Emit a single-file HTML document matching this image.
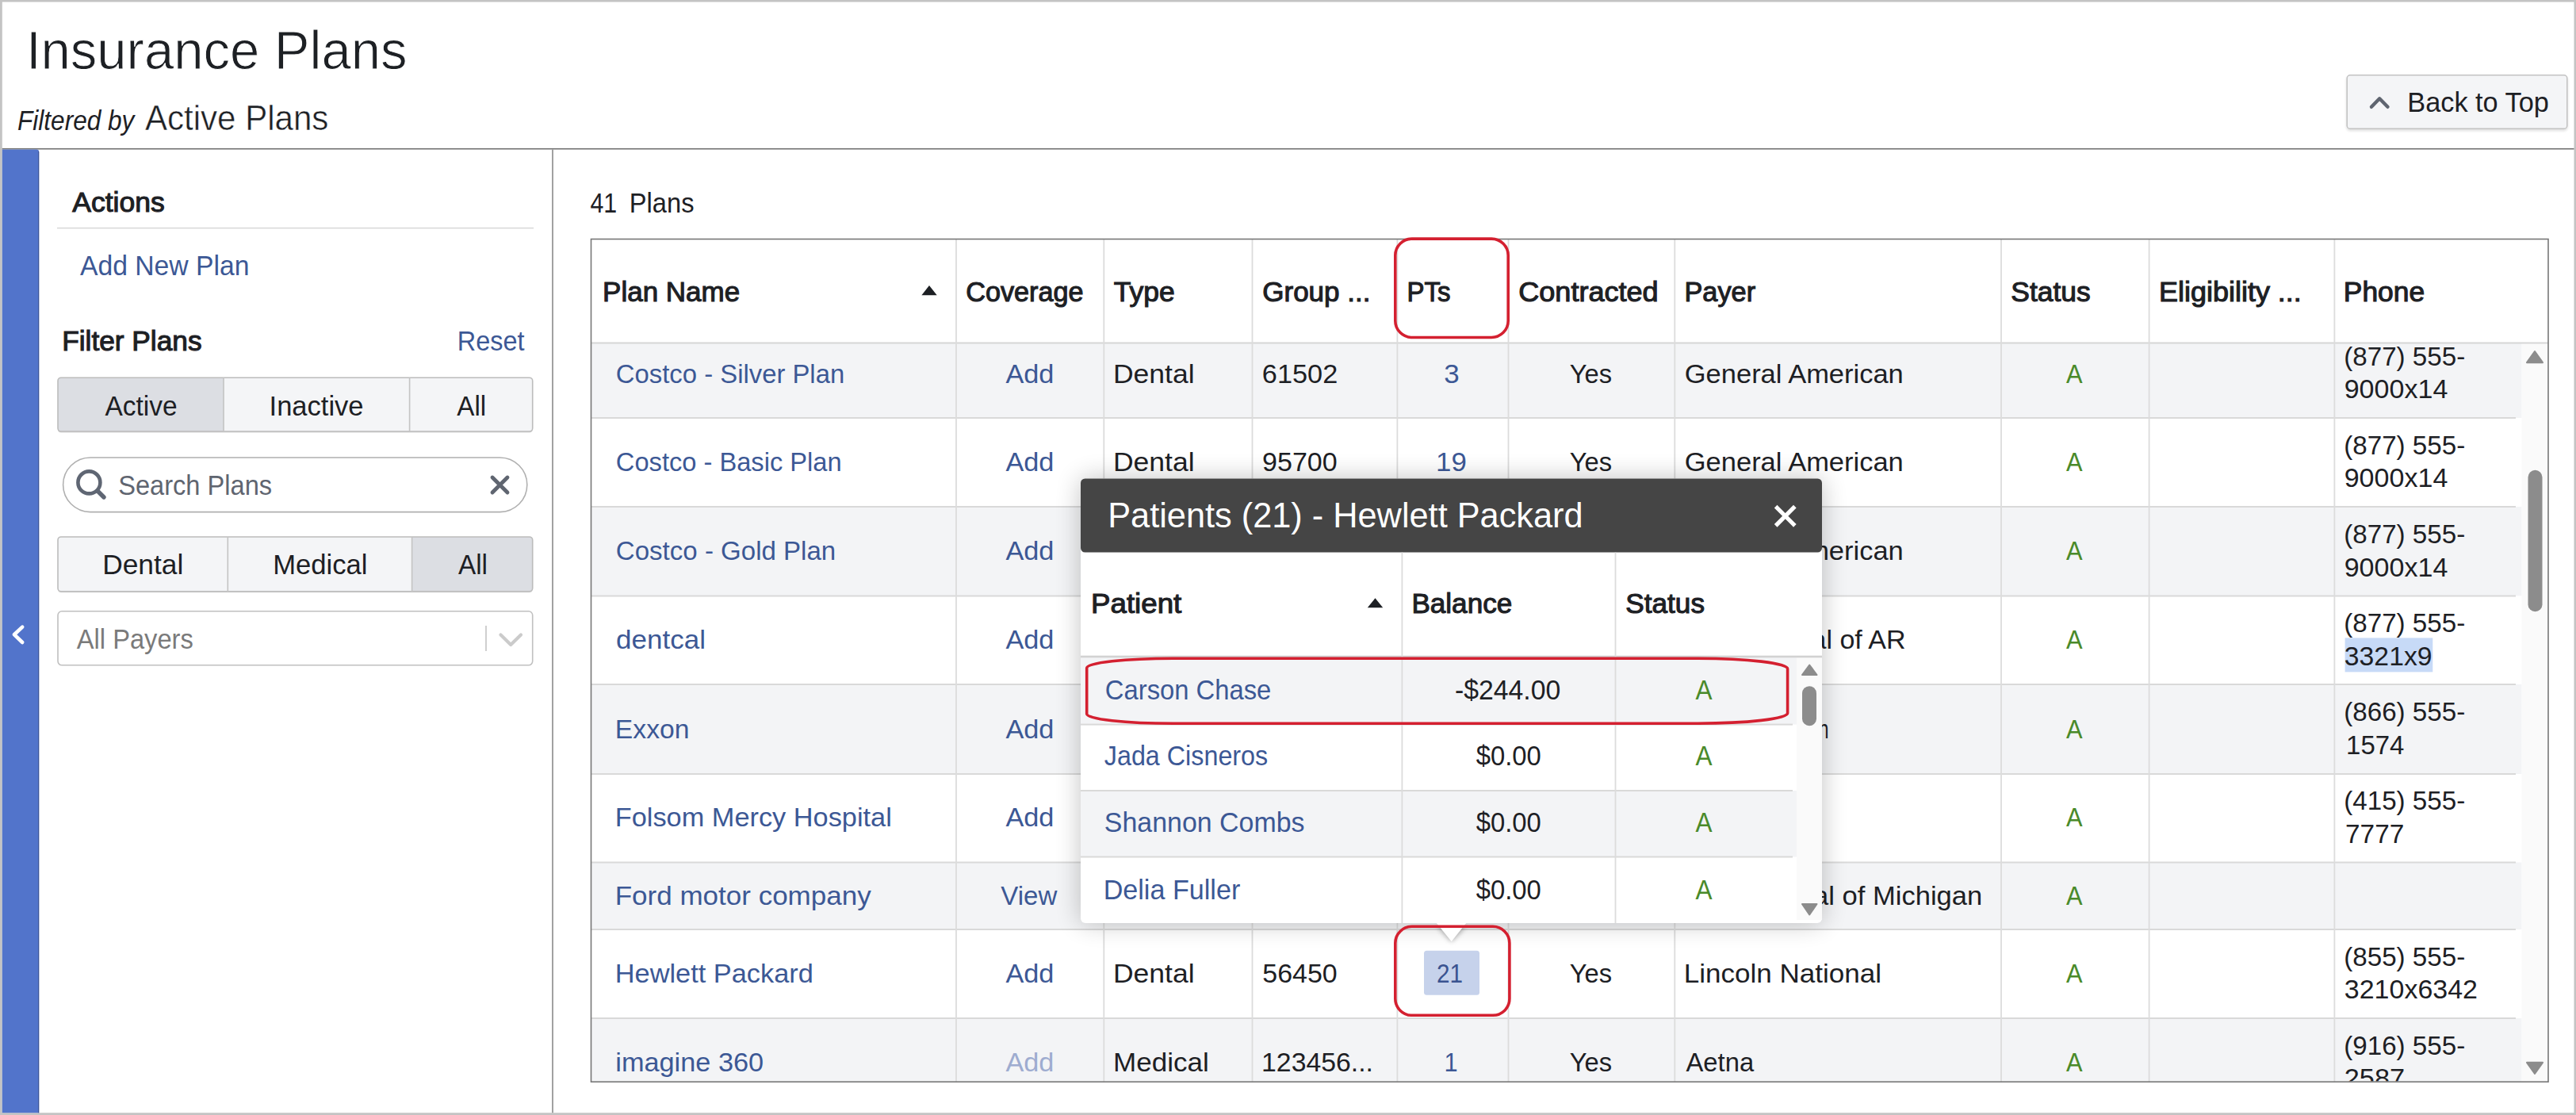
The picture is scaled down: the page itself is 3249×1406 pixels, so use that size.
<!DOCTYPE html>
<html><head><meta charset="utf-8"><title>Insurance Plans</title>
<style>html,body{margin:0;padding:0;background:#fff;overflow:hidden;width:3249px;height:1406px}
svg{display:block;position:absolute;left:0;top:0} text{font-family:"Liberation Sans",sans-serif}</style></head>
<body><svg width="3249" height="1406" viewBox="0 0 3249 1406">
<defs>
<filter id="popsh" x="-10%" y="-10%" width="120%" height="125%"><feGaussianBlur stdDeviation="16"/></filter>
<filter id="arrsh" x="-50%" y="-50%" width="200%" height="200%"><feGaussianBlur stdDeviation="3"/></filter>
<filter id="btnsh" x="-5%" y="-10%" width="110%" height="130%"><feDropShadow dx="0" dy="2" stdDeviation="1.5" flood-color="#000" flood-opacity="0.12"/></filter>
</defs>
<rect x="0.00" y="0.00" width="3249.00" height="1406.00" fill="#ffffff"/>
<rect x="0.00" y="0.00" width="3249.00" height="2.50" fill="#c4c4c4"/>
<rect x="0.00" y="0.00" width="2.80" height="1406.00" fill="#c4c4c4"/>
<rect x="3246.50" y="0.00" width="2.50" height="1406.00" fill="#c4c4c4"/>
<rect x="0.00" y="1403.20" width="3249.00" height="2.80" fill="#c4c4c4"/>
<text x="32.97" y="87.20" font-size="68.31" fill="#1d2024" textLength="480.45" lengthAdjust="spacingAndGlyphs" stroke="#ffffff" stroke-width="0.9">Insurance Plans</text>
<text x="22.05" y="164.00" font-size="34.88" font-style="italic" fill="#1d2024" textLength="147.32" lengthAdjust="spacingAndGlyphs">Filtered by</text>
<text x="183.00" y="164.00" font-size="45.06" fill="#1d2024" textLength="231.37" lengthAdjust="spacingAndGlyphs" stroke="#ffffff" stroke-width="0.5">Active Plans</text>
<rect x="2.80" y="186.90" width="3243.70" height="1.60" fill="#707070"/>
<rect x="2960.2" y="94.8" width="277.6" height="67.6" rx="4" fill="#f4f5f7" stroke="#c3c3c3" stroke-width="1.6" filter="url(#btnsh)"/>
<polyline points="2991,134.8 3001.2,124.3 3011.5,134.8" fill="none" stroke="#5f6570" stroke-width="4.4" stroke-linecap="round" stroke-linejoin="round"/>
<text x="3036.25" y="141.00" font-size="34.59" fill="#1d2024" textLength="178.69" lengthAdjust="spacingAndGlyphs">Back to Top</text>
<path d="M2.8,188.5 H46 Q49.2,188.5 49.2,191.7 V1403.2 H2.8 Z" fill="#5274cb"/>
<rect x="48.00" y="191.00" width="1.20" height="1212.20" fill="#3d5699"/>
<polyline points="28.2,790.6 17.9,800.2 28.2,810" fill="none" stroke="#ffffff" stroke-width="4.6" stroke-linecap="round" stroke-linejoin="round"/>
<rect x="696.20" y="188.50" width="1.60" height="1214.70" fill="#8a8a8a"/>
<text x="91.30" y="267.40" font-size="34.88" stroke="#1d2024" stroke-width="1.1" fill="#1d2024" textLength="116.42" lengthAdjust="spacingAndGlyphs">Actions</text>
<rect x="72.00" y="286.80" width="601.00" height="1.60" fill="#d9d9d9"/>
<text x="101.00" y="347.00" font-size="35.32" fill="#3c5895" textLength="213.46" lengthAdjust="spacingAndGlyphs">Add New Plan</text>
<text x="78.18" y="442.00" font-size="34.88" stroke="#1d2024" stroke-width="1.1" fill="#1d2024" textLength="176.41" lengthAdjust="spacingAndGlyphs">Filter Plans</text>
<text x="576.71" y="442.00" font-size="34.88" fill="#3c5895" textLength="84.73" lengthAdjust="spacingAndGlyphs">Reset</text>
<rect x="73" y="477.70" width="598.7" height="67.80" rx="4" fill="#b8b8b8" opacity="0.55"/>
<clipPath id="cg476"><rect x="73" y="476.2" width="598.7" height="67.80000000000001" rx="4"/></clipPath>
<g clip-path="url(#cg476)">
<rect x="73.00" y="476.20" width="209.00" height="67.80" fill="#dcdee3"/>
<rect x="282.00" y="476.20" width="234.60" height="67.80" fill="#f4f5f7"/>
<rect x="516.60" y="476.20" width="155.10" height="67.80" fill="#f4f5f7"/>
</g>
<rect x="73" y="476.2" width="598.7" height="67.80000000000001" rx="4" fill="none" stroke="#bcbcbc" stroke-width="1.6"/>
<rect x="281.20" y="476.20" width="1.60" height="67.80" fill="#c4c4c4"/>
<rect x="515.80" y="476.20" width="1.60" height="67.80" fill="#c4c4c4"/>
<text x="132.50" y="523.60" font-size="34.88" fill="#1d2024" textLength="91.11" lengthAdjust="spacingAndGlyphs">Active</text>
<text x="339.59" y="523.60" font-size="34.88" fill="#1d2024" textLength="119.01" lengthAdjust="spacingAndGlyphs">Inactive</text>
<text x="576.30" y="523.60" font-size="34.88" fill="#1d2024" textLength="36.91" lengthAdjust="spacingAndGlyphs">All</text>
<rect x="73" y="678.50" width="598.7" height="68.70" rx="4" fill="#b8b8b8" opacity="0.55"/>
<clipPath id="cg677"><rect x="73" y="677" width="598.7" height="68.70000000000005" rx="4"/></clipPath>
<g clip-path="url(#cg677)">
<rect x="73.00" y="677.00" width="214.30" height="68.70" fill="#f4f5f7"/>
<rect x="287.30" y="677.00" width="232.30" height="68.70" fill="#f4f5f7"/>
<rect x="519.60" y="677.00" width="152.10" height="68.70" fill="#dcdee3"/>
</g>
<rect x="73" y="677" width="598.7" height="68.70000000000005" rx="4" fill="none" stroke="#bcbcbc" stroke-width="1.6"/>
<rect x="286.50" y="677.00" width="1.60" height="68.70" fill="#c4c4c4"/>
<rect x="518.80" y="677.00" width="1.60" height="68.70" fill="#c4c4c4"/>
<text x="129.17" y="724.40" font-size="34.88" fill="#1d2024" textLength="102.15" lengthAdjust="spacingAndGlyphs">Dental</text>
<text x="344.23" y="724.40" font-size="34.88" fill="#1d2024" textLength="119.25" lengthAdjust="spacingAndGlyphs">Medical</text>
<text x="578.00" y="724.40" font-size="34.88" fill="#1d2024" textLength="37.01" lengthAdjust="spacingAndGlyphs">All</text>
<rect x="79.6" y="577" width="585.2" height="68.6" rx="34.3" fill="#ffffff" stroke="#b0b0b0" stroke-width="1.6"/>
<circle cx="112.4" cy="608.4" r="14" fill="none" stroke="#5f6673" stroke-width="4.6"/>
<line x1="123" y1="619" x2="131" y2="627" stroke="#5f6673" stroke-width="5.4" stroke-linecap="round"/>
<text x="149.23" y="624.00" font-size="35.47" fill="#5f6570" textLength="193.84" lengthAdjust="spacingAndGlyphs">Search Plans</text>
<path d="M621,602 L640,621 M640,602 L621,621" stroke="#5f6570" stroke-width="4.8" stroke-linecap="round"/>
<rect x="73" y="770.8" width="598.7" height="68" rx="5" fill="#ffffff" stroke="#c0c0c0" stroke-width="1.6"/>
<text x="96.80" y="817.80" font-size="34.88" fill="#7a7a7a" textLength="147.00" lengthAdjust="spacingAndGlyphs">All Payers</text>
<rect x="612.00" y="789.00" width="2.00" height="32.00" fill="#cfcfcf"/>
<polyline points="631.5,800.5 644.2,813 657,800.5" fill="none" stroke="#cbcbcb" stroke-width="4.2" stroke-linecap="round" stroke-linejoin="round"/>
<text x="744.39" y="268.30" font-size="35.32" fill="#1d2024" textLength="33.74" lengthAdjust="spacingAndGlyphs">41</text>
<text x="793.79" y="268.30" font-size="35.32" fill="#1d2024" textLength="81.71" lengthAdjust="spacingAndGlyphs">Plans</text>
<rect x="745.50" y="432.50" width="2435.00" height="94.50" fill="#f3f4f6"/>
<rect x="745.50" y="527.00" width="2435.00" height="112.00" fill="#ffffff"/>
<rect x="745.50" y="639.00" width="2435.00" height="112.50" fill="#f3f4f6"/>
<rect x="745.50" y="751.50" width="2435.00" height="111.50" fill="#ffffff"/>
<rect x="745.50" y="863.00" width="2435.00" height="113.00" fill="#f3f4f6"/>
<rect x="745.50" y="976.00" width="2435.00" height="111.50" fill="#ffffff"/>
<rect x="745.50" y="1087.50" width="2435.00" height="84.50" fill="#f3f4f6"/>
<rect x="745.50" y="1172.00" width="2435.00" height="112.00" fill="#ffffff"/>
<rect x="745.50" y="1284.00" width="2435.00" height="80.20" fill="#f3f4f6"/>
<rect x="3180.50" y="432.50" width="33.50" height="931.70" fill="#fafafa"/>
<rect x="745.50" y="526.00" width="2427.50" height="2.00" fill="#d9d9d9"/>
<rect x="745.50" y="638.00" width="2427.50" height="2.00" fill="#d9d9d9"/>
<rect x="745.50" y="750.50" width="2427.50" height="2.00" fill="#d9d9d9"/>
<rect x="745.50" y="862.00" width="2427.50" height="2.00" fill="#d9d9d9"/>
<rect x="745.50" y="975.00" width="2427.50" height="2.00" fill="#d9d9d9"/>
<rect x="745.50" y="1086.50" width="2427.50" height="2.00" fill="#d9d9d9"/>
<rect x="745.50" y="1171.00" width="2427.50" height="2.00" fill="#d9d9d9"/>
<rect x="745.50" y="1283.00" width="2427.50" height="2.00" fill="#d9d9d9"/>
<rect x="745.50" y="431.50" width="2468.50" height="2.00" fill="#d6d6d6"/>
<rect x="1205.10" y="301.50" width="1.80" height="1062.70" fill="#dcdcdc"/>
<rect x="1391.40" y="301.50" width="1.80" height="1062.70" fill="#dcdcdc"/>
<rect x="1578.60" y="301.50" width="1.80" height="1062.70" fill="#dcdcdc"/>
<rect x="1761.50" y="301.50" width="1.80" height="1062.70" fill="#dcdcdc"/>
<rect x="1901.60" y="301.50" width="1.80" height="1062.70" fill="#dcdcdc"/>
<rect x="2111.40" y="301.50" width="1.80" height="1062.70" fill="#dcdcdc"/>
<rect x="2523.10" y="301.50" width="1.80" height="1062.70" fill="#dcdcdc"/>
<rect x="2709.70" y="301.50" width="1.80" height="1062.70" fill="#dcdcdc"/>
<rect x="2943.50" y="301.50" width="1.80" height="1062.70" fill="#dcdcdc"/>
<text x="760.10" y="379.60" font-size="34.30" stroke="#1d2024" stroke-width="1.1" fill="#1d2024" textLength="173.04" lengthAdjust="spacingAndGlyphs">Plan Name</text>
<polygon points="1162.4,372.3 1181.7,372.3 1172,360" fill="#1d2024"/>
<text x="1218.19" y="379.60" font-size="34.30" stroke="#1d2024" stroke-width="1.1" fill="#1d2024" textLength="148.29" lengthAdjust="spacingAndGlyphs">Coverage</text>
<text x="1404.89" y="379.60" font-size="34.30" stroke="#1d2024" stroke-width="1.1" fill="#1d2024" textLength="76.91" lengthAdjust="spacingAndGlyphs">Type</text>
<text x="1592.25" y="379.60" font-size="34.30" stroke="#1d2024" stroke-width="1.1" fill="#1d2024" textLength="136.22" lengthAdjust="spacingAndGlyphs">Group ...</text>
<text x="1774.56" y="379.60" font-size="34.30" stroke="#1d2024" stroke-width="1.1" fill="#1d2024" textLength="55.07" lengthAdjust="spacingAndGlyphs">PTs</text>
<text x="1915.20" y="379.60" font-size="34.30" stroke="#1d2024" stroke-width="1.1" fill="#1d2024" textLength="176.51" lengthAdjust="spacingAndGlyphs">Contracted</text>
<text x="2124.45" y="379.60" font-size="34.30" stroke="#1d2024" stroke-width="1.1" fill="#1d2024" textLength="89.64" lengthAdjust="spacingAndGlyphs">Payer</text>
<text x="2536.31" y="379.60" font-size="34.30" stroke="#1d2024" stroke-width="1.1" fill="#1d2024" textLength="100.33" lengthAdjust="spacingAndGlyphs">Status</text>
<text x="2722.92" y="379.60" font-size="34.30" stroke="#1d2024" stroke-width="1.1" fill="#1d2024" textLength="179.97" lengthAdjust="spacingAndGlyphs">Eligibility ...</text>
<text x="2955.77" y="379.60" font-size="34.30" stroke="#1d2024" stroke-width="1.1" fill="#1d2024" textLength="102.39" lengthAdjust="spacingAndGlyphs">Phone</text>
<clipPath id="tbody"><rect x="745.5" y="433.5" width="2468.5" height="930"/></clipPath>
<g clip-path="url(#tbody)">
<text x="776.86" y="483.30" font-size="34.01" fill="#3c5895" textLength="288.31" lengthAdjust="spacingAndGlyphs">Costco - Silver Plan</text>
<text x="1268.40" y="483.30" font-size="34.01" fill="#3c5895" textLength="61.01" lengthAdjust="spacingAndGlyphs">Add</text>
<text x="2606.00" y="483.30" font-size="34.01" fill="#4a8a2a" textLength="20.56" lengthAdjust="spacingAndGlyphs">A</text>
<text x="776.87" y="594.40" font-size="34.01" fill="#3c5895" textLength="284.78" lengthAdjust="spacingAndGlyphs">Costco - Basic Plan</text>
<text x="1268.40" y="594.40" font-size="34.01" fill="#3c5895" textLength="61.01" lengthAdjust="spacingAndGlyphs">Add</text>
<text x="2606.00" y="594.40" font-size="34.01" fill="#4a8a2a" textLength="20.56" lengthAdjust="spacingAndGlyphs">A</text>
<text x="776.85" y="706.30" font-size="34.01" fill="#3c5895" textLength="277.39" lengthAdjust="spacingAndGlyphs">Costco - Gold Plan</text>
<text x="1268.40" y="706.30" font-size="34.01" fill="#3c5895" textLength="61.01" lengthAdjust="spacingAndGlyphs">Add</text>
<text x="2606.00" y="706.30" font-size="34.01" fill="#4a8a2a" textLength="20.56" lengthAdjust="spacingAndGlyphs">A</text>
<text x="777.10" y="818.30" font-size="34.01" fill="#3c5895" textLength="112.86" lengthAdjust="spacingAndGlyphs">dentcal</text>
<text x="1268.40" y="818.30" font-size="34.01" fill="#3c5895" textLength="61.01" lengthAdjust="spacingAndGlyphs">Add</text>
<text x="2606.00" y="818.30" font-size="34.01" fill="#4a8a2a" textLength="20.56" lengthAdjust="spacingAndGlyphs">A</text>
<text x="775.80" y="930.80" font-size="34.01" fill="#3c5895" textLength="93.67" lengthAdjust="spacingAndGlyphs">Exxon</text>
<text x="1268.40" y="930.80" font-size="34.01" fill="#3c5895" textLength="61.01" lengthAdjust="spacingAndGlyphs">Add</text>
<text x="2606.00" y="930.80" font-size="34.01" fill="#4a8a2a" textLength="20.56" lengthAdjust="spacingAndGlyphs">A</text>
<text x="775.75" y="1042.40" font-size="34.01" fill="#3c5895" textLength="349.02" lengthAdjust="spacingAndGlyphs">Folsom Mercy Hospital</text>
<text x="1268.40" y="1042.40" font-size="34.01" fill="#3c5895" textLength="61.01" lengthAdjust="spacingAndGlyphs">Add</text>
<text x="2606.00" y="1042.40" font-size="34.01" fill="#4a8a2a" textLength="20.56" lengthAdjust="spacingAndGlyphs">A</text>
<text x="775.70" y="1140.70" font-size="34.01" fill="#3c5895" textLength="323.03" lengthAdjust="spacingAndGlyphs">Ford motor company</text>
<text x="1262.33" y="1140.70" font-size="34.01" fill="#3c5895" textLength="71.05" lengthAdjust="spacingAndGlyphs">View</text>
<text x="2606.00" y="1140.70" font-size="34.01" fill="#4a8a2a" textLength="20.56" lengthAdjust="spacingAndGlyphs">A</text>
<text x="775.75" y="1238.60" font-size="34.01" fill="#3c5895" textLength="250.11" lengthAdjust="spacingAndGlyphs">Hewlett Packard</text>
<text x="1268.40" y="1238.60" font-size="34.01" fill="#3c5895" textLength="61.01" lengthAdjust="spacingAndGlyphs">Add</text>
<text x="2606.00" y="1238.60" font-size="34.01" fill="#4a8a2a" textLength="20.56" lengthAdjust="spacingAndGlyphs">A</text>
<text x="776.27" y="1351.30" font-size="34.01" fill="#3c5895" textLength="186.85" lengthAdjust="spacingAndGlyphs">imagine 360</text>
<text x="1268.40" y="1351.30" font-size="34.01" fill="#9eacd0" textLength="61.01" lengthAdjust="spacingAndGlyphs">Add</text>
<text x="2606.00" y="1351.30" font-size="34.01" fill="#4a8a2a" textLength="20.56" lengthAdjust="spacingAndGlyphs">A</text>
<text x="1403.96" y="483.30" font-size="34.01" fill="#1d2024" textLength="102.68" lengthAdjust="spacingAndGlyphs">Dental</text>
<text x="1403.96" y="594.40" font-size="34.01" fill="#1d2024" textLength="102.68" lengthAdjust="spacingAndGlyphs">Dental</text>
<text x="1403.96" y="706.30" font-size="34.01" fill="#1d2024" textLength="102.68" lengthAdjust="spacingAndGlyphs">Dental</text>
<text x="1403.96" y="818.30" font-size="34.01" fill="#1d2024" textLength="102.68" lengthAdjust="spacingAndGlyphs">Dental</text>
<text x="1403.96" y="930.80" font-size="34.01" fill="#1d2024" textLength="102.68" lengthAdjust="spacingAndGlyphs">Dental</text>
<text x="1404.00" y="1042.40" font-size="34.01" fill="#1d2024" textLength="120.71" lengthAdjust="spacingAndGlyphs">Medical</text>
<text x="1403.96" y="1140.70" font-size="34.01" fill="#1d2024" textLength="102.68" lengthAdjust="spacingAndGlyphs">Dental</text>
<text x="1403.96" y="1238.60" font-size="34.01" fill="#1d2024" textLength="102.68" lengthAdjust="spacingAndGlyphs">Dental</text>
<text x="1404.00" y="1351.30" font-size="34.01" fill="#1d2024" textLength="120.71" lengthAdjust="spacingAndGlyphs">Medical</text>
<text x="1591.89" y="483.30" font-size="34.01" fill="#1d2024" textLength="95.36" lengthAdjust="spacingAndGlyphs">61502</text>
<text x="1592.07" y="594.40" font-size="34.01" fill="#1d2024" textLength="94.65" lengthAdjust="spacingAndGlyphs">95700</text>
<text x="1592.07" y="706.30" font-size="34.01" fill="#1d2024" textLength="94.65" lengthAdjust="spacingAndGlyphs">84210</text>
<text x="1592.24" y="818.30" font-size="34.01" fill="#1d2024" textLength="94.48" lengthAdjust="spacingAndGlyphs">31200</text>
<text x="1591.89" y="930.80" font-size="34.01" fill="#1d2024" textLength="94.83" lengthAdjust="spacingAndGlyphs">77420</text>
<text x="1592.23" y="1042.40" font-size="34.01" fill="#1d2024" textLength="95.00" lengthAdjust="spacingAndGlyphs">55012</text>
<text x="1591.89" y="1140.70" font-size="34.01" fill="#1d2024" textLength="94.83" lengthAdjust="spacingAndGlyphs">66300</text>
<text x="1592.24" y="1238.60" font-size="34.01" fill="#1d2024" textLength="94.48" lengthAdjust="spacingAndGlyphs">56450</text>
<text x="1591.07" y="1351.30" font-size="34.01" fill="#1d2024" textLength="140.89" lengthAdjust="spacingAndGlyphs">123456...</text>
<text x="1821.20" y="483.30" font-size="34.01" fill="#3c5895" textLength="19.44" lengthAdjust="spacingAndGlyphs">3</text>
<text x="1811.09" y="594.40" font-size="34.01" fill="#3c5895" textLength="38.76" lengthAdjust="spacingAndGlyphs">19</text>
<text x="1821.13" y="706.30" font-size="34.01" fill="#3c5895" textLength="20.78" lengthAdjust="spacingAndGlyphs">7</text>
<text x="1821.13" y="818.30" font-size="34.01" fill="#3c5895" textLength="20.78" lengthAdjust="spacingAndGlyphs">2</text>
<text x="1822.33" y="930.80" font-size="34.01" fill="#3c5895" textLength="18.72" lengthAdjust="spacingAndGlyphs">4</text>
<text x="1821.57" y="1042.40" font-size="34.01" fill="#3c5895" textLength="19.91" lengthAdjust="spacingAndGlyphs">5</text>
<text x="1821.13" y="1140.70" font-size="34.01" fill="#3c5895" textLength="20.78" lengthAdjust="spacingAndGlyphs">2</text>
<text x="1821.49" y="1351.30" font-size="34.01" fill="#3c5895" textLength="17.13" lengthAdjust="spacingAndGlyphs">1</text>
<rect x="1796" y="1198.8" width="70" height="56" rx="3.5" fill="#c6d2eb"/>
<text x="1812.02" y="1239.00" font-size="34.01" fill="#3a5390" textLength="32.99" lengthAdjust="spacingAndGlyphs">21</text>
<text x="1979.68" y="483.30" font-size="34.01" fill="#1d2024" textLength="53.31" lengthAdjust="spacingAndGlyphs">Yes</text>
<text x="1979.68" y="594.40" font-size="34.01" fill="#1d2024" textLength="53.31" lengthAdjust="spacingAndGlyphs">Yes</text>
<text x="1979.68" y="706.30" font-size="34.01" fill="#1d2024" textLength="53.31" lengthAdjust="spacingAndGlyphs">Yes</text>
<text x="1979.68" y="818.30" font-size="34.01" fill="#1d2024" textLength="53.31" lengthAdjust="spacingAndGlyphs">Yes</text>
<text x="1979.68" y="930.80" font-size="34.01" fill="#1d2024" textLength="53.31" lengthAdjust="spacingAndGlyphs">Yes</text>
<text x="1979.68" y="1042.40" font-size="34.01" fill="#1d2024" textLength="53.31" lengthAdjust="spacingAndGlyphs">Yes</text>
<text x="1979.68" y="1140.70" font-size="34.01" fill="#1d2024" textLength="53.31" lengthAdjust="spacingAndGlyphs">Yes</text>
<text x="1979.68" y="1238.60" font-size="34.01" fill="#1d2024" textLength="53.31" lengthAdjust="spacingAndGlyphs">Yes</text>
<text x="1979.68" y="1351.30" font-size="34.01" fill="#1d2024" textLength="53.31" lengthAdjust="spacingAndGlyphs">Yes</text>
<text x="2124.78" y="483.30" font-size="34.01" fill="#1d2024" textLength="276.04" lengthAdjust="spacingAndGlyphs">General American</text>
<text x="2124.78" y="594.40" font-size="34.01" fill="#1d2024" textLength="276.04" lengthAdjust="spacingAndGlyphs">General American</text>
<text x="2124.78" y="706.30" font-size="34.01" fill="#1d2024" textLength="276.04" lengthAdjust="spacingAndGlyphs">General American</text>
<text x="2123.78" y="818.30" font-size="34.01" fill="#1d2024" textLength="279.81" lengthAdjust="spacingAndGlyphs">Delta Dental of AR</text>
<text x="2124.63" y="930.80" font-size="34.01" fill="#1d2024" textLength="181.95" lengthAdjust="spacingAndGlyphs">Delta Dental Plan</text>
<text x="2123.74" y="1140.70" font-size="34.01" fill="#1d2024" textLength="376.50" lengthAdjust="spacingAndGlyphs">Delta Dental of Michigan</text>
<text x="2123.70" y="1238.60" font-size="34.01" fill="#1d2024" textLength="249.42" lengthAdjust="spacingAndGlyphs">Lincoln National</text>
<text x="2126.50" y="1351.30" font-size="34.01" fill="#1d2024" textLength="85.61" lengthAdjust="spacingAndGlyphs">Aetna</text>
<text x="2956.21" y="460.60" font-size="34.01" fill="#1d2024" textLength="153.05" lengthAdjust="spacingAndGlyphs">(877) 555-</text>
<text x="2956.67" y="502.30" font-size="34.01" fill="#1d2024" textLength="130.72" lengthAdjust="spacingAndGlyphs">9000x14</text>
<text x="2956.21" y="572.60" font-size="34.01" fill="#1d2024" textLength="153.05" lengthAdjust="spacingAndGlyphs">(877) 555-</text>
<text x="2956.67" y="614.30" font-size="34.01" fill="#1d2024" textLength="130.72" lengthAdjust="spacingAndGlyphs">9000x14</text>
<text x="2956.21" y="684.80" font-size="34.01" fill="#1d2024" textLength="153.05" lengthAdjust="spacingAndGlyphs">(877) 555-</text>
<text x="2956.67" y="726.50" font-size="34.01" fill="#1d2024" textLength="130.72" lengthAdjust="spacingAndGlyphs">9000x14</text>
<rect x="2957.60" y="804.40" width="110.70" height="43.00" fill="#c7daf7"/>
<text x="2956.21" y="796.90" font-size="34.01" fill="#1d2024" textLength="153.05" lengthAdjust="spacingAndGlyphs">(877) 555-</text>
<text x="2956.85" y="838.60" font-size="34.01" fill="#1d2024" textLength="110.70" lengthAdjust="spacingAndGlyphs">3321x9</text>
<text x="2956.21" y="909.10" font-size="34.01" fill="#1d2024" textLength="153.05" lengthAdjust="spacingAndGlyphs">(866) 555-</text>
<text x="2959.02" y="950.80" font-size="34.01" fill="#1d2024" textLength="73.46" lengthAdjust="spacingAndGlyphs">1574</text>
<text x="2956.21" y="1021.10" font-size="34.01" fill="#1d2024" textLength="153.05" lengthAdjust="spacingAndGlyphs">(415) 555-</text>
<text x="2958.03" y="1062.80" font-size="34.01" fill="#1d2024" textLength="74.23" lengthAdjust="spacingAndGlyphs">7777</text>
<text x="2956.21" y="1217.60" font-size="34.01" fill="#1d2024" textLength="153.05" lengthAdjust="spacingAndGlyphs">(855) 555-</text>
<text x="2956.84" y="1259.30" font-size="34.01" fill="#1d2024" textLength="168.14" lengthAdjust="spacingAndGlyphs">3210x6342</text>
<text x="2956.21" y="1329.60" font-size="34.01" fill="#1d2024" textLength="153.05" lengthAdjust="spacingAndGlyphs">(916) 555-</text>
<text x="2956.78" y="1371.30" font-size="34.01" fill="#1d2024" textLength="76.42" lengthAdjust="spacingAndGlyphs">2587</text>
</g>
<path d="M3197,443 L3207,457.2 L3187,457.2 Z" fill="#8c8c8c" stroke="#8c8c8c" stroke-width="2" stroke-linejoin="round"/>
<rect x="3188.5" y="592.8" width="18" height="178.4" rx="9" fill="#8c8c8c"/>
<path d="M3187,1339.8 L3207,1339.8 L3197,1354 Z" fill="#8c8c8c" stroke="#8c8c8c" stroke-width="2" stroke-linejoin="round"/>
<rect x="745.5" y="301.5" width="2468.5" height="1062.7" fill="none" stroke="#777777" stroke-width="1.6"/>
<rect x="1759.8" y="301.1" width="142.4" height="124.4" rx="21" fill="none" stroke="#d42030" stroke-width="3.6"/>
<rect x="1363" y="603.5" width="935" height="560.5" rx="6" fill="#000" opacity="0.24" filter="url(#popsh)"/>
<path d="M1813,1168 L1848.3,1168 L1830.7,1187.3 Z" fill="#000" opacity="0.35" filter="url(#arrsh)"/>
<rect x="1363" y="603.5" width="935" height="560.5" rx="6" fill="#ffffff"/>
<rect x="1363" y="603.5" width="935" height="93.10" rx="5.5" fill="#454545"/>
<text x="1397.24" y="665.30" font-size="44.19" fill="#ffffff" textLength="599.35" lengthAdjust="spacingAndGlyphs">Patients (21) - Hewlett Packard</text>
<path d="M2241.5,640.5 L2262,661 M2262,640.5 L2241.5,661" stroke="#ffffff" stroke-width="5.2" stroke-linecap="square"/>
<rect x="1363.00" y="828.00" width="903.00" height="85.60" fill="#f3f4f6"/>
<rect x="1363.00" y="997.00" width="903.00" height="83.50" fill="#f3f4f6"/>
<rect x="2266.00" y="828.00" width="32.00" height="332.00" fill="#fafafa"/>
<rect x="1363.00" y="912.60" width="898.00" height="2.00" fill="#d9d9d9"/>
<rect x="1363.00" y="996.00" width="898.00" height="2.00" fill="#d9d9d9"/>
<rect x="1363.00" y="1079.50" width="898.00" height="2.00" fill="#d9d9d9"/>
<rect x="1363.00" y="826.70" width="935.00" height="2.60" fill="#d2d2d2"/>
<rect x="1767.50" y="696.60" width="1.80" height="467.40" fill="#dcdcdc"/>
<rect x="2036.60" y="696.60" width="1.80" height="467.40" fill="#dcdcdc"/>
<text x="1376.06" y="773.40" font-size="35.17" stroke="#1d2024" stroke-width="1.1" fill="#1d2024" textLength="114.24" lengthAdjust="spacingAndGlyphs">Patient</text>
<polygon points="1724.8,766.3 1744.2,766.3 1734.5,754.2" fill="#1d2024"/>
<text x="1780.39" y="773.40" font-size="35.17" stroke="#1d2024" stroke-width="1.1" fill="#1d2024" textLength="126.85" lengthAdjust="spacingAndGlyphs">Balance</text>
<text x="2050.32" y="773.40" font-size="35.17" stroke="#1d2024" stroke-width="1.1" fill="#1d2024" textLength="99.71" lengthAdjust="spacingAndGlyphs">Status</text>
<text x="1393.86" y="881.80" font-size="34.59" fill="#3c5895" textLength="209.49" lengthAdjust="spacingAndGlyphs">Carson Chase</text>
<text x="1834.98" y="881.80" font-size="34.59" fill="#1d2024" textLength="133.30" lengthAdjust="spacingAndGlyphs">-$244.00</text>
<text x="2138.60" y="881.80" font-size="34.59" fill="#4a8a2a" textLength="21.06" lengthAdjust="spacingAndGlyphs">A</text>
<text x="1392.82" y="965.30" font-size="34.59" fill="#3c5895" textLength="206.39" lengthAdjust="spacingAndGlyphs">Jada Cisneros</text>
<text x="1861.67" y="965.30" font-size="34.59" fill="#1d2024" textLength="82.16" lengthAdjust="spacingAndGlyphs">$0.00</text>
<text x="2138.60" y="965.30" font-size="34.59" fill="#4a8a2a" textLength="21.06" lengthAdjust="spacingAndGlyphs">A</text>
<text x="1392.87" y="1049.40" font-size="34.59" fill="#3c5895" textLength="252.59" lengthAdjust="spacingAndGlyphs">Shannon Combs</text>
<text x="1861.67" y="1049.40" font-size="34.59" fill="#1d2024" textLength="82.16" lengthAdjust="spacingAndGlyphs">$0.00</text>
<text x="2138.60" y="1049.40" font-size="34.59" fill="#4a8a2a" textLength="21.06" lengthAdjust="spacingAndGlyphs">A</text>
<text x="1391.67" y="1133.50" font-size="34.59" fill="#3c5895" textLength="172.62" lengthAdjust="spacingAndGlyphs">Delia Fuller</text>
<text x="1861.67" y="1133.50" font-size="34.59" fill="#1d2024" textLength="82.16" lengthAdjust="spacingAndGlyphs">$0.00</text>
<text x="2138.60" y="1133.50" font-size="34.59" fill="#4a8a2a" textLength="21.06" lengthAdjust="spacingAndGlyphs">A</text>
<path d="M2282.2,838.5 L2291.5,851 L2273,851 Z" fill="#8c8c8c" stroke="#8c8c8c" stroke-width="2" stroke-linejoin="round"/>
<rect x="2273" y="865.2" width="18" height="50" rx="9" fill="#8c8c8c"/>
<path d="M2273,1140 L2291.5,1140 L2282.2,1153.4 Z" fill="#8c8c8c" stroke="#8c8c8c" stroke-width="2" stroke-linejoin="round"/>
<path d="M1811,1163 L1850,1163 L1830.7,1187.3 Z" fill="#ffffff"/>
<path d="M1479.7,830.3 H2141.6 A113,13 0 0 1 2254.6,843.3 V899.2 A113,13 0 0 1 2141.6,912.2 H1479.7 A109,12 0 0 1 1370.7,900.2 V842.3 A109,12 0 0 1 1479.7,830.3 Z" fill="none" stroke="#d42030" stroke-width="3.6"/>
<rect x="1759.8" y="1168.3" width="144.1" height="112" rx="21" fill="none" stroke="#d42030" stroke-width="3.6"/>
</svg></body></html>
